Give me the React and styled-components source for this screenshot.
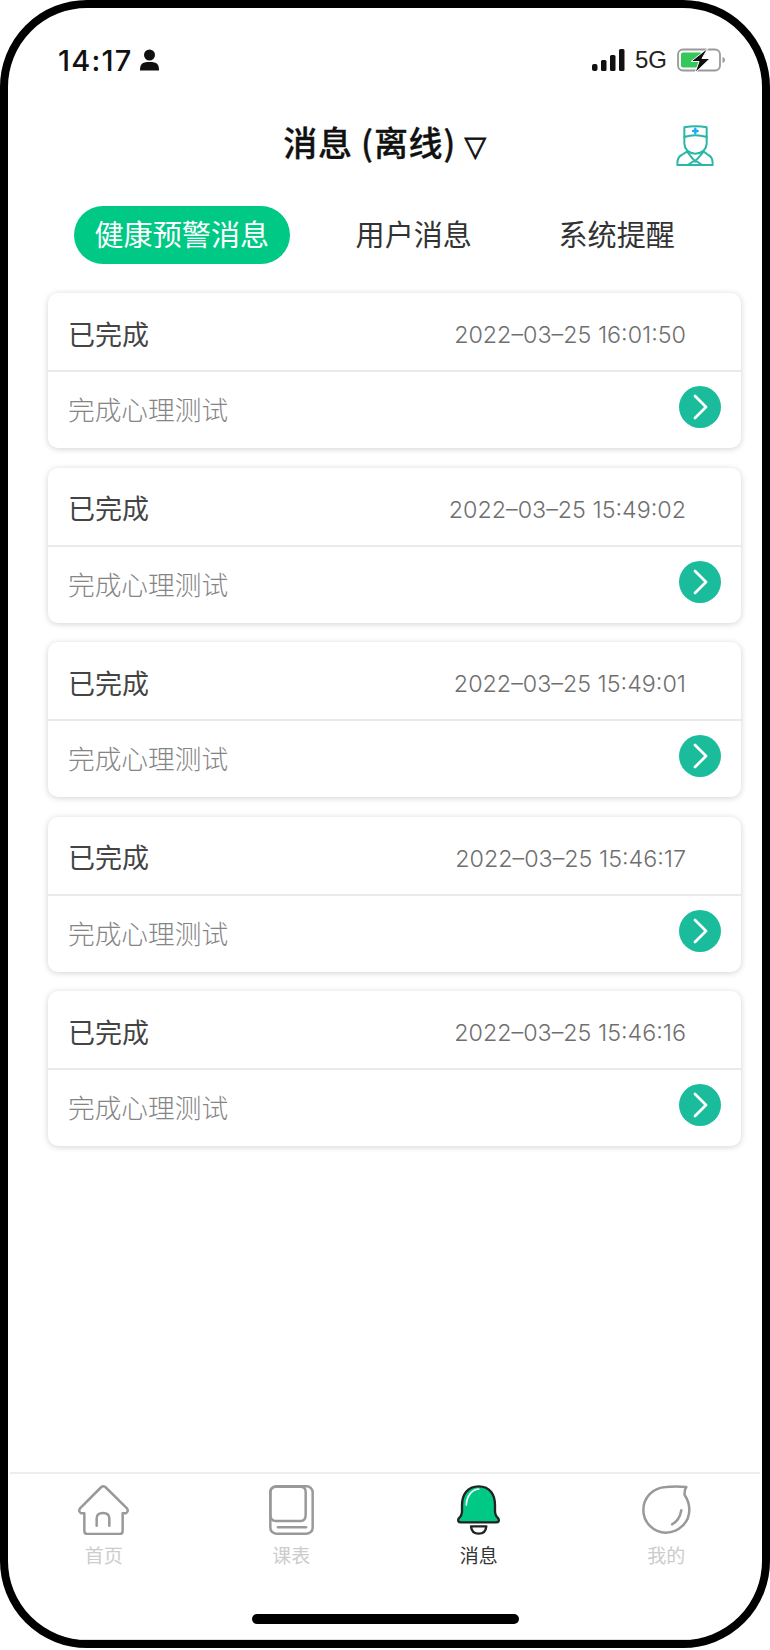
import React from "react";
import styled, { createGlobalStyle } from "styled-components";

const GlobalStyle = createGlobalStyle`
  * { box-sizing: border-box; }
  html, body { margin: 0; padding: 0; background: #fff; }
  body { font-family: "Noto Sans CJK SC", "Liberation Sans", sans-serif; }
`;

const Frame = styled.div`
  width: 770px;
  height: 1648px;
  border: 8px solid #000;
  border-radius: 87px;
  background: #fff;
  overflow: hidden;
  display: flex;
  flex-direction: column;
`;

const StatusBar = styled.div`
  height: 90px;
  padding: 34px 36px 0 50px;
  display: flex;
  justify-content: space-between;
  align-items: flex-start;
`;

const StatusGroup = styled.div`
  display: flex;
  align-items: center;
  height: 36px;
  gap: ${(p) => p.$gap}px;
`;

const Time = styled.span`
  font-family: Inter, sans-serif;
  font-size: 29px;
  font-weight: 500;
  letter-spacing: 1.2px;
  color: #111;
`;

const Network = styled.span`
  font-family: "Liberation Sans", sans-serif;
  font-size: 24px;
  color: #222;
`;

const Header = styled.div`
  height: 90px;
  margin-bottom: 2px;
  position: relative;
  display: flex;
  align-items: center;
  justify-content: center;
`;

const Title = styled.h1`
  margin: 0;
  font-size: 34px;
  font-weight: 500;
  letter-spacing: 0.7px;
  -webkit-text-stroke: 0.3px #111;
  color: #111;
  line-height: 1;
  white-space: nowrap;
`;

const TitleMark = styled.span`
  font-family: "DejaVu Sans", sans-serif;
  font-size: 28px;
  font-weight: 700;
  -webkit-text-stroke: 0.8px #111;
`;

const DoctorSlot = styled.div`
  position: absolute;
  right: 47px;
  top: 26px;
  line-height: 0;
`;

const Tabs = styled.div`
  margin-top: 16px;
  padding-left: 66px;
  display: flex;
  gap: 45.5px;
`;

const Tab = styled.div`
  height: 58px;
  padding: 0 20.5px 4px;
  border-radius: 29px;
  display: flex;
  align-items: center;
  font-size: 29.1px;
  color: ${(p) => (p.$active ? "#fff" : "#333")};
  background: ${(p) => (p.$active ? "#00c985" : "transparent")};
`;

const List = styled.div`
  margin: 29px 21px 0 40px;
  display: flex;
  flex-direction: column;
  gap: 19.6px;
`;

const Card = styled.div`
  height: 155px;
  border-radius: 10px;
  background: #fff;
  box-shadow: 0 1px 6px rgba(0, 0, 0, 0.18);
  display: flex;
  flex-direction: column;
`;

const CardTop = styled.div`
  height: 79px;
  padding: 0 55px 0 20px;
  border-bottom: 2px solid #eaeaea;
  display: flex;
  justify-content: space-between;
  align-items: center;
`;

const CardTitle = styled.span`
  padding-top: 3px;
  font-size: 27px;
  color: #444;
`;

const CardDate = styled.span`
  padding-top: 6px;
  font-family: Inter, "Liberation Sans", sans-serif;
  font-size: 23.3px;
  font-weight: 300;
  color: #6f6f6f;
`;

const CardBottom = styled.div`
  flex: 1;
  padding: 0 20px 3px 20px;
  display: flex;
  justify-content: space-between;
  align-items: center;
`;

const CardText = styled.span`
  font-size: 26.7px;
  font-weight: 300;
  color: #858585;
`;

const Arrow = styled.div`
  width: 42px;
  height: 42px;
  margin-bottom: 3px;
  border-radius: 50%;
  background: #1abc9c;
  display: flex;
  align-items: center;
  justify-content: center;
`;

const BottomArea = styled.div`
  margin-top: auto;
  display: flex;
  flex-direction: column;
  align-items: center;
`;

const TabBar = styled.nav`
  width: 750px;
  height: 142px;
  padding-top: 11px;
  border-top: 2px solid #eee;
  display: grid;
  grid-template-columns: repeat(4, 1fr);
`;

const NavItem = styled.div`
  display: flex;
  flex-direction: column;
  align-items: center;
  gap: 7px;
`;

const NavIcon = styled.div`
  height: 50px;
  line-height: 0;
`;

const NavLabel = styled.span`
  font-size: 19px;
  line-height: 26px;
  color: ${(p) => (p.$active ? "#333" : "#ccc")};
`;

const HomeIndicator = styled.div`
  width: 267px;
  height: 10px;
  border-radius: 5px;
  background: #000;
`;

const Hairline = styled.div`
  width: 612px;
  height: 1px;
  margin-top: 15px;
  background: #ddd;
`;

const PersonIcon = () => (
  <svg width="21" height="22" viewBox="0 0 21 22">
    <circle cx="10.500" cy="6" r="5.500" fill="#111" />
    <path d="M1 21.500c0-6 1.500-8.500 9.500-8.500s9.500 2.500 9.500 8.500z" fill="#111" />
  </svg>
);

const SignalIcon = () => (
  <svg width="33" height="22" viewBox="0 0 33 22" fill="#111">
    <rect x="0" y="15" width="5.500" height="7" rx="2" />
    <rect x="9" y="11" width="5.500" height="11" rx="1.500" />
    <rect x="18" y="6" width="5.500" height="16" rx="1.500" />
    <rect x="27" y="0" width="5.500" height="22" rx="1.500" />
  </svg>
);

const BatteryIcon = () => (
  <svg width="49" height="25" viewBox="0 0 49 25">
    <rect x="1" y="1.500" width="42" height="21" rx="5" fill="none" stroke="#999" strokeWidth="1.800" />
    <rect x="4" y="4.500" width="21" height="15" rx="2" fill="#34c759" />
    <path d="M45.500 9v6c1.500-.5 2.500-1.500 2.500-3s-1-2.500-2.500-3z" fill="#999" />
    <path d="M31 0L14 13.500h8L18 25l15-14.500h-8z" fill="#111" stroke="#fff" strokeWidth="1" />
  </svg>
);

const DoctorIcon = () => (
  <svg width="40" height="44" viewBox="0 0 120 130" fill="none" stroke="#2ab7a5" strokeWidth="6" strokeLinejoin="round" strokeLinecap="round">
    <path d="M28 9Q62 3 95 9V38Q60 28 28 38z" />
    <path d="M28 38V58Q30 86 61 88Q93 86 95 58V38" />
    <path d="M36 82L20 92Q6 98 7 122H113Q114 98 100 92L86 82" />
    <path d="M38 84L60 112L84 84M38 122L60 108L82 122" />
    <path d="M61 13V27M54 20H68" stroke="#1fa9f0" strokeWidth="7" />
  </svg>
);

const ChevronIcon = () => (
  <svg width="16" height="26" viewBox="0 0 16 26" fill="none" stroke="#fff" strokeWidth="2.800" strokeLinecap="round" strokeLinejoin="round">
    <path d="M3 2l11 11L3 24" />
  </svg>
);

const HomeIcon = () => (
  <svg width="51" height="50" viewBox="0 0 153 150" fill="none" stroke="#999" strokeWidth="7.500" strokeLinejoin="round" strokeLinecap="round">
    <path d="M70 6Q76 2 82 6L147 70Q153 80 143 85H134V138Q134 147 125 147H28Q19 147 19 138V85H10Q0 80 6 70z" />
    <path d="M56 122V100Q56 84 75 84Q94 84 94 100V122" />
  </svg>
);

const BookIcon = () => (
  <svg width="45" height="50" viewBox="0 0 135 150" fill="none" stroke="#999" strokeWidth="7.500" strokeLinejoin="round" strokeLinecap="round">
    <rect x="4" y="4" width="127" height="142" rx="18" />
    <path d="M4 90V21Q4 5 21 5H95Q110 5 110 21V90Q110 108 95 108H21Q4 108 4 90z" />
    <path d="M27 127H111" />
  </svg>
);

const BellIcon = () => (
  <svg width="43" height="50" viewBox="0 0 129 150" strokeLinejoin="round">
    <path d="M65 4C30 4 15 30 15 60V78Q15 92 5 100Q0 112 12 112H117Q129 112 124 100Q114 92 114 78V60C114 30 100 4 65 4z" fill="#00c985" stroke="#222" strokeWidth="7" />
    <path d="M28 60C29 32 45 14 65 12" fill="none" stroke="#fff" strokeWidth="5" strokeLinecap="round" />
    <path d="M42 124H88Q86 146 65 146Q44 146 42 124z" fill="#fff" stroke="#222" strokeWidth="7" />
  </svg>
);

const PeachIcon = () => (
  <svg width="49" height="49" viewBox="0 0 147 147" fill="none" stroke="#999" strokeWidth="7.500" strokeLinejoin="round" strokeLinecap="round">
    <path d="M133 6Q100 3 72 6C32 8 4 38 4 75C4 112 34 143 72 143C110 143 142 112 142 75C142 58 138 45 128 30Q126 16 133 6z" />
    <path d="M90 118Q112 108 118 76" />
  </svg>
);

const messages = [
  "2022–03–25 16:01:50",
  "2022–03–25 15:49:02",
  "2022–03–25 15:49:01",
  "2022–03–25 15:46:17",
  "2022–03–25 15:46:16",
];

const navItems = [
  { label: "首页", icon: <HomeIcon /> },
  { label: "课表", icon: <BookIcon /> },
  { label: "消息", icon: <BellIcon />, active: true },
  { label: "我的", icon: <PeachIcon /> },
];

export default function App() {
  return (
    <>
      <GlobalStyle />
      <Frame>
        <StatusBar>
          <StatusGroup $gap={7}>
            <Time>14:17</Time>
            <PersonIcon />
          </StatusGroup>
          <StatusGroup $gap={10}>
            <SignalIcon />
            <Network>5G</Network>
            <BatteryIcon />
          </StatusGroup>
        </StatusBar>
        <Header>
          <Title>
            消息 (离线) <TitleMark>▽</TitleMark>
          </Title>
          <DoctorSlot>
            <DoctorIcon />
          </DoctorSlot>
        </Header>
        <Tabs>
          <Tab $active>健康预警消息</Tab>
          <Tab>用户消息</Tab>
          <Tab>系统提醒</Tab>
        </Tabs>
        <List>
          {messages.map((date) => (
            <Card key={date}>
              <CardTop>
                <CardTitle>已完成</CardTitle>
                <CardDate>{date}</CardDate>
              </CardTop>
              <CardBottom>
                <CardText>完成心理测试</CardText>
                <Arrow>
                  <ChevronIcon />
                </Arrow>
              </CardBottom>
            </Card>
          ))}
        </List>
        <BottomArea>
          <TabBar>
            {navItems.map((item) => (
              <NavItem key={item.label}>
                <NavIcon>{item.icon}</NavIcon>
                <NavLabel $active={item.active}>{item.label}</NavLabel>
              </NavItem>
            ))}
          </TabBar>
          <HomeIndicator />
          <Hairline />
        </BottomArea>
      </Frame>
    </>
  );
}
